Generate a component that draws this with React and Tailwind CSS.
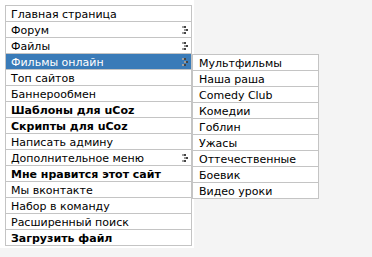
import React from 'react';

const mainItems = [
    { label: 'Главная страница' },
    { label: 'Форум', sub: true },
    { label: 'Файлы', sub: true },
    { label: 'Фильмы онлайн', sub: true, active: true },
    { label: 'Топ сайтов' },
    { label: 'Баннерообмен' },
    { label: 'Шаблоны для uCoz', bold: true },
    { label: 'Скрипты для uCoz', bold: true },
    { label: 'Написать админу' },
    { label: 'Дополнительное меню', sub: true },
    { label: 'Мне нравится этот сайт', bold: true },
    { label: 'Мы вконтакте' },
    { label: 'Набор в команду' },
    { label: 'Расширенный поиск' },
    { label: 'Загрузить файл', bold: true },
];

const subItems = [
    'Мультфильмы',
    'Наша раша',
    'Comedy Club',
    'Комедии',
    'Гоблин',
    'Ужасы',
    'Оттечественные',
    'Боевик',
    'Видео уроки',
];

// tiny pixel arrow used by uCoz menus
const Arrow = () => (
    <svg width="6" height="8" viewBox="0 0 6 8" shapeRendering="crispEdges">
        <rect x="0" y="0" width="2" height="2" fill="#a0a0a0" />
        <rect x="2" y="0" width="2" height="2" fill="#444" />
        <rect x="4" y="3" width="2" height="2" fill="#444" />
        <rect x="2" y="3" width="2" height="2" fill="#9a9a9a" />
        <rect x="0" y="6" width="2" height="2" fill="#a0a0a0" />
        <rect x="2" y="6" width="2" height="2" fill="#444" />
    </svg>
);

const App = () => {
    return (
        <div className="w-[372px] h-[257px] bg-[#f4f4f4] font-['DejaVu_Sans',sans-serif] text-[11px] text-black relative">
            <div className="w-[194px] bg-white pt-[5px] pl-[5px] pb-[2px]">
                <div className="w-[187px] border border-b-0 border-[#c4c4c4]">
                    {mainItems.map((item) => (
                        <div
                            key={item.label}
                            className={`h-[16px] border-b border-[#c4c4c4] pl-[5px] pr-[3px] pt-[1px] flex items-center justify-between leading-[15px] ${item.active ? 'bg-[#3a7bb8] text-white' : ''} ${item.bold ? 'font-bold' : ''}`}
                        >
                            <span>{item.label}</span>
                            {item.sub && <Arrow />}
                        </div>
                    ))}
                </div>
            </div>

            <div className="absolute left-[192px] top-[54px] w-[127px] bg-white border border-b-0 border-[#c4c4c4]">
                {subItems.map((s) => (
                    <div key={s} className="h-[16px] border-b border-[#c4c4c4] pl-[6px] pt-[1px] flex items-center leading-[15px]">
                        {s}
                    </div>
                ))}
            </div>
        </div>
    );
};

export default App;
